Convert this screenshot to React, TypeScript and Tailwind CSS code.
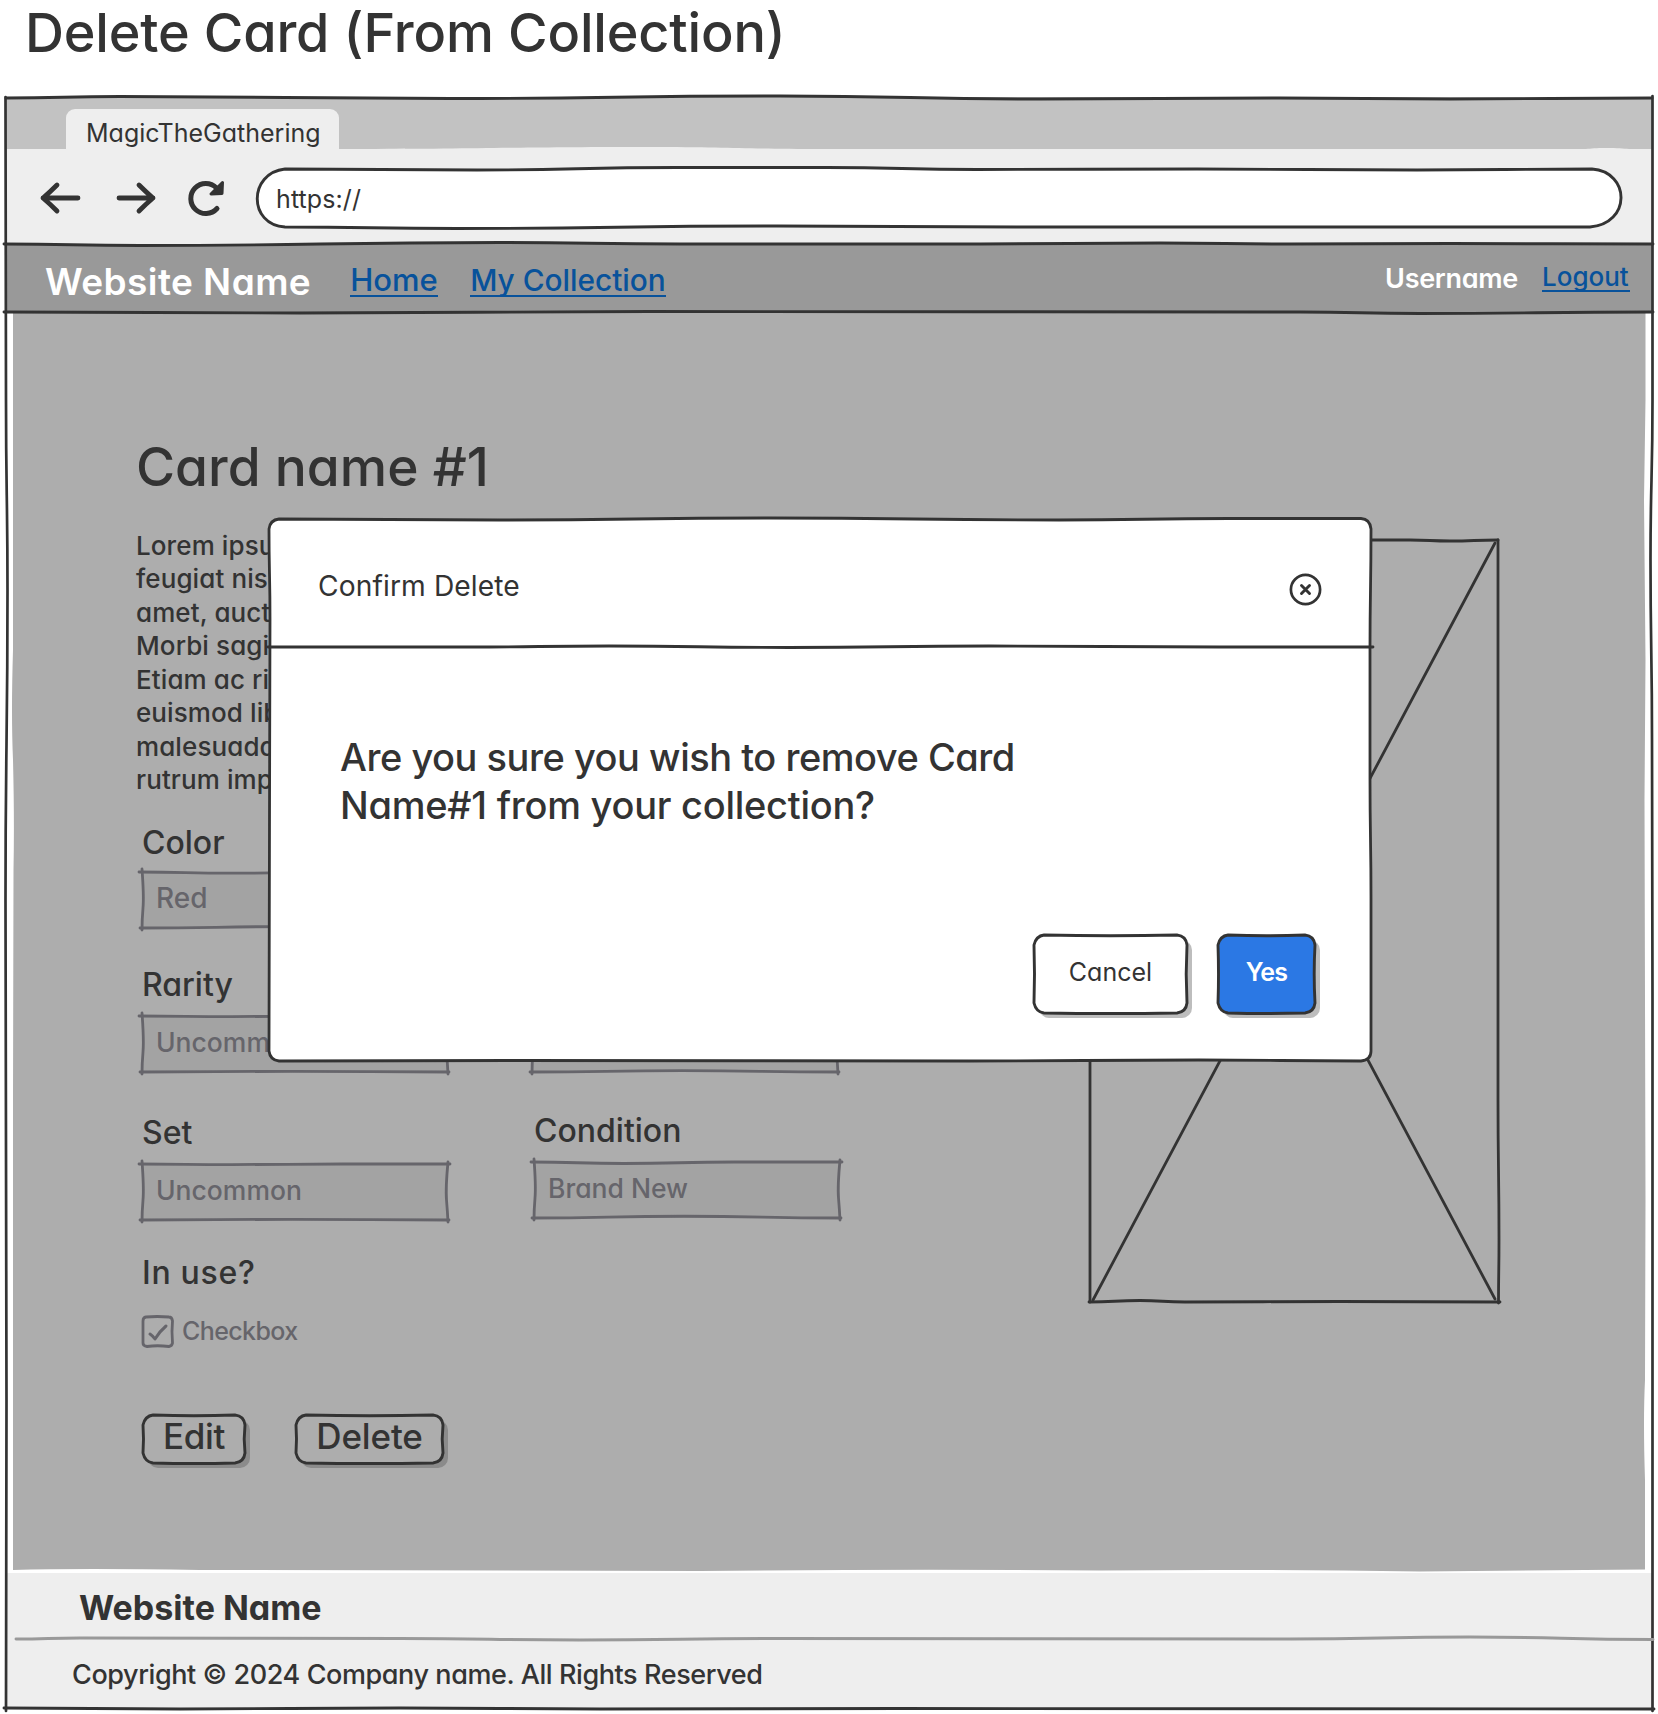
import type { ReactNode } from "react";

const INK = "#333333";
const MUTED = "#66656b";

type Pt = [number, number];

/* Smooth horizontal stroke through the points, level at each of them. */
function across(points: Pt[]) {
  return points
    .map(([x, y], i) => {
      if (i === 0) return `M${x} ${y}`;
      const [px, py] = points[i - 1];
      const mid = (px + x) / 2;
      return `C${mid} ${py} ${mid} ${y} ${x} ${y}`;
    })
    .join("");
}

/* Same for a vertical stroke. */
function down(points: Pt[]) {
  return points
    .map(([x, y], i) => {
      if (i === 0) return `M${x} ${y}`;
      const [px, py] = points[i - 1];
      const mid = (py + y) / 2;
      return `C${px} ${mid} ${x} ${mid} ${x} ${y}`;
    })
    .join("");
}

/* Hand-drawn stroke layer that sits over the box it decorates. */
function Sketch({
  w,
  h,
  x = 0,
  y = 0,
  children,
}: {
  w: number;
  h: number;
  x?: number;
  y?: number;
  children: ReactNode;
}) {
  return (
    <svg
      className="pointer-events-none absolute top-0 left-0 overflow-visible"
      width={w}
      height={h}
      viewBox={`${x} ${y} ${w} ${h}`}
      fill="none"
      strokeLinecap="round"
      strokeLinejoin="round"
    >
      {children}
    </svg>
  );
}

function Input({ value, bend = 1 }: { value: string; bend?: number }) {
  return (
    <div className="relative flex h-[56px] w-[306px] items-center bg-[#a3a3a3] pb-[4px] pl-[14px]">
      <Sketch w={306} h={56}>
        <g stroke={MUTED} strokeWidth="2.8">
          <path d={across([[-3, 0], [90, bend * 0.6], [200, 0], [308, 0]])} />
          <path d={across([[-2, 56], [150, 56 - bend * 0.7], [307, 56]])} />
          <path d="M0 -3Q2 24 1 36T0 58" />
          <path d="M306 -2Q303.500 24 304.500 36T306 58" />
        </g>
      </Sketch>
      <span className="text-[#66656b]">{value}</span>
    </div>
  );
}

function SketchButton({
  w,
  h,
  fill,
  shadow,
  children,
}: {
  w: number;
  h: number;
  fill: string;
  shadow: string;
  children: ReactNode;
}) {
  const outline = `M10 0Q${w / 2} 1.6 ${w - 10} 0Q${w - 1} 1 ${w} 10Q${w - 1.6} ${h / 2} ${w} ${h - 10}Q${w - 1} ${h - 1} ${w - 10} ${h}Q${w / 2} ${h + 1} 10 ${h}Q2 ${h - 1} 0 ${h - 10}Q1 ${h / 2} 0 10Q2 1 10 0Z`;
  return (
    <div className="relative h-full w-full">
      <Sketch w={w} h={h}>
        <rect x="5" y="5" width={w} height={h} rx="10" fill={shadow} />
        <path d={outline} fill={fill} stroke={INK} strokeWidth="2.9" />
      </Sketch>
      <div className="relative flex h-full w-full items-center justify-center">{children}</div>
    </div>
  );
}

function TabStrip() {
  return (
    <div className="flex h-[52px] items-end bg-[#c2c2c2] pl-[60px]">
      <div className="flex h-[40px] w-[273px] rounded-t-[9px] bg-[#eeeeee] pt-[9px] pl-[20px]">
        <span className="text-[25px] leading-[30px]">MagicTheGathering</span>
      </div>
    </div>
  );
}

function Toolbar() {
  return (
    <div className="relative flex h-[95px] items-center bg-[#eeeeee] pt-[3px] pl-[33px]">
      <Sketch w={1646} h={95}>
        <path
          d={`${across([[0, 1], [130, -1], [340, 0], [640, -2], [820, 0], [1150, 1], [1560, 1], [1600, -1], [1646, 1]])}V6H0Z`}
          fill="#eeeeee"
        />
      </Sketch>
      <svg className="relative" width="42" height="34" viewBox="0 0 42 34" fill="none" stroke={INK} strokeWidth="4.8" strokeLinecap="round" strokeLinejoin="round">
        <path d="M39 17H4M18 4Q11 11 4 17Q11 23 18 30" />
      </svg>
      <svg className="relative ml-[35px]" width="42" height="34" viewBox="0 0 42 34" fill="none" stroke={INK} strokeWidth="4.8" strokeLinecap="round" strokeLinejoin="round">
        <path d="M3 17H37M23 4Q30 11 37 17Q30 23 23 30" />
      </svg>
      <svg className="relative ml-[26px]" width="42" height="40" viewBox="0 0 42 40" fill="none" stroke={INK} strokeWidth="5" strokeLinecap="round" strokeLinejoin="round">
        <path d="M33 30.500A15 15 0 1 1 32.500 10" />
        <path d="M38.500 4.500L38 15.500L27 16Z" fill={INK} strokeWidth="3" />
      </svg>
      <div className="relative ml-[31px] h-[58px] w-[1364px]">
        <Sketch w={1364} h={58}>
          <path
            d={`${across([[28, 0], [220, 1], [420, -1.5], [570, -1.5], [720, 0.5], [940, 0], [1160, 1], [1335, 0]])}C1374 3 1374 55 1333 58${across([[1333, 58], [760, 58], [520, 57], [200, 59.5], [28, 58]]).replace(/^M\S+ \d+/, "")}C-9 56 -9 4 28 0Z`}
            fill="#ffffff"
            stroke={INK}
            strokeWidth="2.9"
          />
        </Sketch>
        <div className="relative flex h-full items-center pt-[2px] pl-[19px]">
          <span className="text-[25px] leading-[30px] tracking-[0.1px]">https://</span>
        </div>
      </div>
    </div>
  );
}

function NavBar() {
  return (
    <nav className="flex h-[68px] items-start bg-[#999999] pl-[39px]">
      <span className="pt-[18px] text-[37px] leading-[40px] font-semibold tracking-[0.42px] text-white">Website Name</span>
      <a className="mt-[19px] ml-[39px] h-[34px] w-[88px] border-b-2 border-[#08529b] text-[31px] leading-[34px] font-medium text-[#08529b]">Home</a>
      <a className="mt-[19px] ml-[32px] h-[34px] w-[196px] border-b-2 border-[#08529b] text-[29.8px] leading-[34px] font-medium whitespace-nowrap text-[#08529b]">My Collection</a>
      <div className="ml-auto flex pr-[22px]">
        <span className="pt-[20px] text-[27px] leading-[30px] font-semibold tracking-[-0.3px] text-white">Username</span>
        <a className="mt-[17px] ml-[24px] h-[31px] w-[88px] border-b-2 border-[#08529b] text-[26px] leading-[31px] font-medium text-[#08529b]">Logout</a>
      </div>
    </nav>
  );
}

const BLURB = ["Lorem ipsum", "feugiat nisi", "amet, auctor", "Morbi sagitt", "Etiam ac risu", "euismod liber", "malesuada", "rutrum imper"];

function CardForm() {
  return (
    <div className="w-[1084px] pt-[125px] pl-[130px]">
      <h2 className="text-[53.3px] leading-[60px] font-medium">Card name #1</h2>
      <p className="mt-[31.5px] text-[26px] leading-[33.57px] font-medium tracking-[0.1px]">
        {BLURB.map((line) => (
          <span key={line} className="block whitespace-nowrap">{line}</span>
        ))}
      </p>
      <div className="pl-[6px] text-[32px] leading-[40px] font-medium">
        <div className="mt-[26px]">
          <div>Color</div>
          <div className="mt-[9px] text-[28px]">
            <Input value="Red" bend={2} />
          </div>
        </div>
        <div className="mt-[37px] flex">
          <div>
            <div>Rarity</div>
            <div className="mt-[11px] text-[26.5px]">
              <Input value="Uncommon" />
            </div>
          </div>
          <div className="ml-[84px] self-end">
            <Input value="" bend={2} />
          </div>
        </div>
        <div className="mt-[41px] flex">
          <div>
            <div>Set</div>
            <div className="mt-[11px] text-[26.5px]">
              <Input value="Uncommon" />
            </div>
          </div>
          <div className="-mt-[2px] ml-[86px]">
            <div>Condition</div>
            <div className="mt-[11px] text-[26.5px]">
              <Input value="Brand New" bend={2.5} />
            </div>
          </div>
        </div>
        <div className="mt-[33px] tracking-[0.7px]">In use?</div>
        <div className="mt-[23px] flex h-[31px] items-center">
          <div className="relative size-[31px]">
            <Sketch w={31} h={31}>
              <path d="M4 1Q15 0 27 1Q30 1 30.500 5Q29.500 15 30.500 27Q30 30 27 30.500Q15 29 5 30.500Q1 30 1 27V5Q1 1.500 4 1Z" stroke={MUTED} strokeWidth="2.8" />
              <path d="M8 18Q11 20 13 23Q18 15 24 10" stroke={MUTED} strokeWidth="3" />
            </Sketch>
          </div>
          <span className="-mt-[2px] ml-[9px] text-[25px] leading-[30px] tracking-[-0.6px] text-[#66656b]">Checkbox</span>
        </div>
      </div>
      <div className="mt-[68px] flex pl-[7px] text-[35px] leading-[40px] font-medium">
        <div className="h-[48px] w-[102px]">
          <SketchButton w={102} h={48} fill="#adadad" shadow="#8b8b8b">
            <span className="-mt-[7px] tracking-[-0.4px]">Edit</span>
          </SketchButton>
        </div>
        <div className="ml-[51px] h-[48px] w-[147px]">
          <SketchButton w={147} h={48} fill="#adadad" shadow="#8b8b8b">
            <span className="-mt-[7px] tracking-[-0.15px]">Delete</span>
          </SketchButton>
        </div>
      </div>
    </div>
  );
}

function CardPicture() {
  return (
    <div className="relative mt-[228px] h-[762px] w-[409px]">
      <Sketch w={409} h={762}>
        <g stroke={INK} strokeWidth="2.8">
          <path d={across([[0, 0], [320, 0], [360, 1], [408, 0]])} />
          <path d={down([[408, 0], [408, 560], [409, 700], [408.5, 763]])} />
          <path d={across([[-1, 762], [50, 760.5], [95, 762], [250, 761.5], [410, 762]])} />
          <path d="M0 0V762" />
          <path d="M405 3L3 760M3 3L405 759" />
        </g>
      </Sketch>
    </div>
  );
}

function Footer() {
  return (
    <footer className="h-[141px] bg-[#eeeeee]">
      <div className="h-[66px] pt-[15px] pl-[73px] text-[34px] leading-[40px] font-bold">Website Name</div>
      <div className="pt-[21px] pl-[66px] text-[27px] leading-[30px] font-medium tracking-[-0.42px]">
        Copyright © 2024 Company name. All Rights Reserved
      </div>
    </footer>
  );
}

function ConfirmDialog() {
  return (
    <div className="absolute top-[422px] left-[269px] h-[542px] w-[1102px]" role="dialog">
      <Sketch w={1102} h={542}>
        <g stroke={INK} strokeWidth="2.8">
          <path
            d={`${across([[10, 0], [230, 1], [500, -1], [790, 1], [960, -0.5], [1092, -0.5]])}Q1101 0 1102 10${down([[1102, 10], [1101, 130], [1101, 260], [1102, 380], [1102, 532]]).replace(/^M\S+ \d+/, "")}Q1102 541 1092 542${across([[1092, 542], [930, 541], [700, 542], [250, 541.5], [10, 542]]).replace(/^M\S+ \d+/, "")}Q1 541 0 532${down([[0, 532], [0.5, 300], [1, 100], [0, 10]]).replace(/^M\S+ \d+/, "")}Q1 1 10 0Z`}
            fill="#ffffff"
          />
          <path d={across([[-1, 128], [200, 128], [340, 127], [520, 128.5], [720, 127], [950, 128], [1104, 128]])} />
        </g>
      </Sketch>
      <div className="relative flex h-full flex-col">
        <div className="flex h-[128px] items-center justify-between pr-[49px] pl-[49px]">
          <span className="pt-[5px] text-[28.2px] leading-[34px] tracking-[0.1px]">Confirm Delete</span>
          <svg className="mt-[13px]" width="33" height="33" viewBox="0 0 33 33" fill="none" stroke={INK} strokeLinecap="round">
            <circle cx="16.500" cy="16.500" r="14.600" strokeWidth="2.7" />
            <path d="M12.500 12.500L20.500 20.500M20.500 12.500L12.500 20.500" strokeWidth="2.9" />
          </svg>
        </div>
        <div className="mt-[86px] pl-[71px] text-[38px] leading-[48px] font-medium">
          <div className="tracking-[-0.48px]">Are you sure you wish to remove Card</div>
          <div className="tracking-[-0.26px]">Name#1 from your collection?</div>
        </div>
        <div className="mt-[106px] flex justify-end pr-[56px]">
          <div className="h-[78px] w-[153px] text-[25px] leading-[30px]">
            <SketchButton w={153} h={78} fill="#ffffff" shadow="#bdbdbd">
              <span className="-mt-[4px]">Cancel</span>
            </SketchButton>
          </div>
          <div className="ml-[31px] h-[78px] w-[97px] text-[25px] leading-[30px] font-semibold text-white">
            <SketchButton w={97} h={78} fill="#2b78e4" shadow="#bdbdbd">
              <span className="-mt-[4px] tracking-[-0.8px]">Yes</span>
            </SketchButton>
          </div>
        </div>
      </div>
    </div>
  );
}

function BrowserOutline() {
  return (
    <Sketch w={1658} h={1617} x={0} y={97}>
      <g stroke={INK} strokeWidth="2.9">
        <path d={across([[6, 98], [120, 96.5], [450, 98.5], [780, 96], [1040, 99], [1280, 98], [1450, 99], [1652, 98]])} />
        <path d={down([[5.5, 97], [6, 400], [7.5, 590], [5.5, 900], [6.5, 1400], [6, 1711]])} strokeWidth="2.7" />
        <path d={down([[1652.5, 96], [1652.5, 400], [1650.5, 560], [1652, 740], [1652.5, 1000], [1652.5, 1711]])} strokeWidth="2.7" />
        <path d={across([[4, 244], [140, 245.5], [500, 242.5], [680, 244], [980, 244], [1160, 243], [1290, 244], [1450, 243.5], [1653, 244]])} />
        <path d={across([[4, 312], [300, 313], [650, 311.5], [1300, 312], [1420, 313.5], [1653, 312]])} />
        <path d={across([[4, 1708], [180, 1709], [400, 1708], [600, 1709], [900, 1708.5], [1654, 1709]])} />
        <path d={across([[16, 1639], [80, 1638], [400, 1638.5], [580, 1640], [780, 1638.5], [1290, 1639], [1470, 1637], [1653, 1639.5]])} stroke="#999999" />
      </g>
    </Sketch>
  );
}

export default function App() {
  return (
    <div className="flex h-[1714px] w-[1658px] flex-col overflow-hidden bg-white font-[Inter,sans-serif] text-[#333333] [font-feature-settings:'cv11']">
      <h1 className="h-[97px] pt-px pl-[25px] text-[54px] leading-[64px] font-medium tracking-[-0.17px]">Delete Card (From Collection)</h1>
      <div className="relative h-[1617px] px-[6px]">
        <TabStrip />
        <Toolbar />
        <NavBar />
        <main className="relative h-[1261px] bg-white">
          <Sketch w={1646} h={1261} x={6} y={312}>
            <path
              d="M13 312V650Q11 715 13 760Q14.500 820 13.500 870L13 1100V1570Q80 1568 200 1570L700 1571Q900 1569 1100 1570.500Q1250 1569 1420 1571.500L1645 1569.500V1480Q1643 1420 1645 1380L1645.500 1200L1645 1000L1644.500 800L1645.500 660L1644 500L1645.500 400V312Z"
              fill="#adadad"
            />
          </Sketch>
          <div className="relative flex">
            <CardForm />
            <CardPicture />
          </div>
        </main>
        <div className="h-[135px] overflow-hidden">
          <Footer />
        </div>
        <BrowserOutline />
        <ConfirmDialog />
      </div>
    </div>
  );
}
